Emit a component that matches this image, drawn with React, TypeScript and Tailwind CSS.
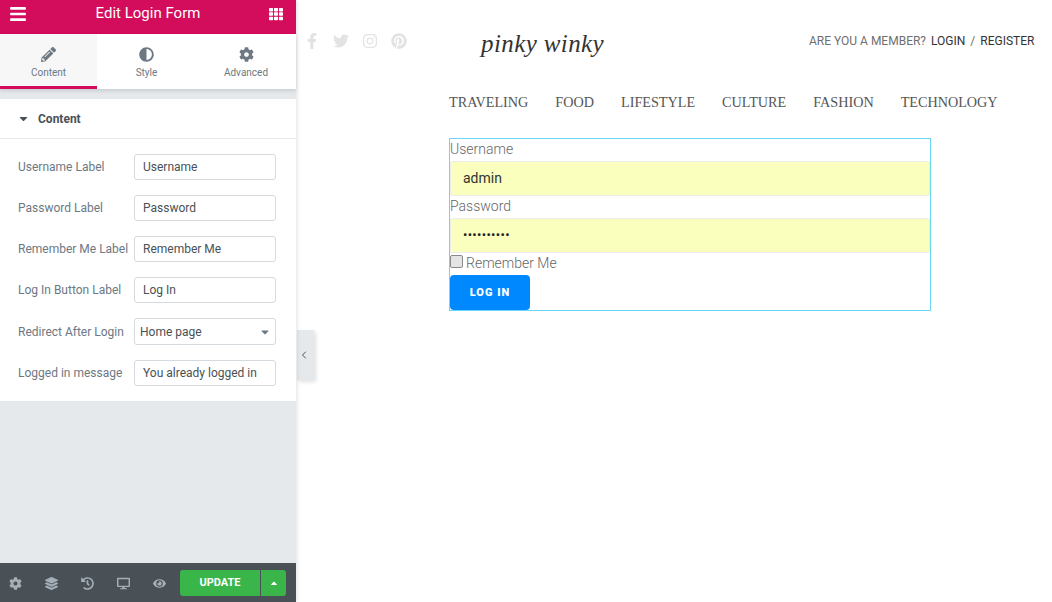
import { FaBars, FaTh, FaPencilAlt, FaAdjust, FaCog, FaCaretDown, FaCaretUp, FaLayerGroup, FaHistory, FaDesktop, FaEye, FaFacebookF, FaTwitter, FaInstagram, FaPinterest } from "react-icons/fa";
import { ChevronLeft } from "lucide-react";

const rows = [
  ["Username Label", "Username"],
  ["Password Label", "Password"],
  ["Remember Me Label", "Remember Me"],
  ["Log In Button Label", "Log In"],
];

function Row({ label, value }: { label: string; value: string }) {
  return (
    <div className="flex items-center h-[26px]">
      <span className="w-[116px] shrink-0 text-[12px] text-[#6d7882] whitespace-nowrap">{label}</span>
      <div className="w-[142px] h-[26px] border border-[#d5dadf] rounded-[3px] pl-[8px] flex items-center text-[12px] text-[#495157] whitespace-nowrap">{value}</div>
    </div>
  );
}

function Tab({ icon, label, active, w }: { icon: React.ReactNode; label: string; active?: boolean; w: string }) {
  return (
    <div className={`${w} h-full flex flex-col items-center pt-[12px] text-[#6d7882] ${active ? "bg-[#f7f7f7] border-b-[3px] border-[#d30c5c]" : ""}`}>
      <div className="h-[16px] flex items-center text-[15px]">{icon}</div>
      <span className="text-[10px] mt-[5px] leading-[12px]">{label}</span>
    </div>
  );
}

export default function App() {
  return (
    <div className="relative flex w-[1052px] h-[602px] bg-white overflow-hidden font-['Roboto',sans-serif]">
      <aside className="w-[296px] shrink-0 h-full flex flex-col bg-[#e6e9ec] shadow-[1px_0_4px_rgba(0,0,0,0.12)] z-10">
        <header className="h-[34px] shrink-0 bg-[#d30c5c] text-white flex items-center justify-between pl-[9px] pr-[13px]">
          <FaBars className="text-[18px] -mt-[6px]" />
          <span className="text-[15px] font-normal -mt-[8px]">Edit Login Form</span>
          <FaTh className="text-[14px] -mt-[6px]" />
        </header>
        <nav className="h-[55px] shrink-0 bg-white flex shadow-[0_2px_4px_rgba(0,0,0,0.12)]">
          <Tab w="w-[97px]" active icon={<FaPencilAlt />} label="Content" />
          <Tab w="w-[99px]" icon={<FaAdjust />} label="Style" />
          <Tab w="w-[100px]" icon={<FaCog />} label="Advanced" />
        </nav>
        <section className="mt-[10px] bg-white h-[302px] shrink-0">
          <div className="h-[40px] border-b border-[#e6e9ec] flex items-center pl-[17px] text-[12px] font-bold text-[#495157]">
            <FaCaretDown className="text-[13px] text-[#495157] mr-[8px]" />
            Content
          </div>
          <div className="pl-[18px] pt-[15px] flex flex-col gap-[15px]">
            {rows.map(([l, v]) => <Row key={l} label={l} value={v} />)}
            <div className="flex items-center h-[27px]">
              <span className="w-[116px] shrink-0 text-[12px] text-[#6d7882] whitespace-nowrap">Redirect After Login</span>
              <div className="w-[142px] h-[27px] border border-[#d5dadf] rounded-[3px] pl-[5px] pr-[4px] flex items-center justify-between text-[12px] text-[#495157]">
                Home page
                <FaCaretDown className="text-[12px] text-[#6d7882]" />
              </div>
            </div>
            <Row label="Logged in message" value="You already logged in" />
          </div>
        </section>
        <div className="flex-1" />
        <footer className="h-[39px] shrink-0 bg-[#495157] flex items-center text-[#a4afb7]">
          <div className="flex items-center w-[180px] pt-[1px] text-[13px] -ml-[3px] mr-[3px]">
            <span className="w-[36.5px] flex justify-center"><FaCog /></span>
            <span className="w-[36.5px] flex justify-center"><FaLayerGroup /></span>
            <span className="w-[36.5px] flex justify-center"><FaHistory /></span>
            <span className="w-[36.5px] flex justify-center"><FaDesktop /></span>
            <span className="w-[36.5px] flex justify-center"><FaEye /></span>
          </div>
          <div className="w-[80px] h-[26px] bg-[#39b54a] rounded-l-[3px] flex items-center justify-center pt-[2px] text-white text-[11px] font-bold">UPDATE</div>
          <div className="ml-[1px] w-[25px] h-[26px] bg-[#39b54a] rounded-r-[3px] flex items-center justify-center text-white text-[10px]"><FaCaretUp /></div>
        </footer>
      </aside>

      <div className="absolute left-[297px] top-[330px] w-[17px] h-[50px] bg-[#e6e9ec] shadow-[2px_2px_4px_rgba(0,0,0,0.12)] flex items-center justify-center pr-[4px] text-[#495157]">
        <ChevronLeft size={12} strokeWidth={2} />
      </div>

      <main className="flex-1 min-w-0">
        <div className="h-[79px] flex items-start">
          <div className="w-[153px] pl-[1.5px] pt-[33px] flex items-center text-[16px] text-[#e3e3e3]">
            <span className="w-[29px] flex justify-center"><FaFacebookF /></span>
            <span className="w-[29px] flex justify-center"><FaTwitter /></span>
            <span className="w-[29px] flex justify-center"><FaInstagram /></span>
            <span className="w-[29px] flex justify-center"><FaPinterest /></span>
          </div>
          <div className="pl-[32px] pt-[24px] font-['Liberation_Serif',serif] italic text-[25px] leading-[40px] text-[#333] tracking-[0.4px] w-[360px] whitespace-nowrap">pinky winky</div>
          <div className="pt-[33px] text-[12px] leading-[16px] whitespace-nowrap text-[#6f6f6f]">
            ARE YOU A MEMBER?<span className="text-[#333] ml-[5px]">LOGIN</span><span className="mx-[5px]">/</span><span className="text-[#333]">REGISTER</span>
          </div>
        </div>
        <nav className="pl-[153px] h-[59px] pt-[13px] flex gap-[27px] font-['Liberation_Serif',serif] text-[14.2px] leading-[20px] text-[#555]">
          <span>TRAVELING</span><span>FOOD</span><span>LIFESTYLE</span><span>CULTURE</span><span>FASHION</span><span>TECHNOLOGY</span>
        </nav>
        <form className="ml-[153px] w-[482px] h-[173px] border border-[#6bd6f6] text-[14px] leading-[20px] text-[#666] font-light">
          <div className="h-[22px]">Username</div>
          <div className="h-[35px] bg-[#faffbd] border border-[#ececec] rounded-[2px] pl-[12px] pb-[2px] flex items-center text-[14px] text-[#333] font-normal">admin</div>
          <div className="h-[22px]">Password</div>
          <div className="h-[35px] bg-[#faffbd] border border-[#ececec] rounded-[2px] pl-[12px] pb-[2px] flex items-center text-[13px] text-[#222] font-normal tracking-[0.3px]">••••••••••</div>
          <div className="h-[22px] flex items-start">
            <input type="checkbox" className="appearance-none w-[13px] h-[13px] m-0 mr-[3px] mt-[2px] bg-[#e4e4e4] border border-[#8a8a8a] rounded-[2px]" readOnly />
            Remember Me
          </div>
          <div className="w-[80px] h-[35px] bg-[#0088ff] rounded-[4px] text-white text-[11px] font-black tracking-[1px] flex items-center justify-center">LOG IN</div>
        </form>
      </main>
    </div>
  );
}
